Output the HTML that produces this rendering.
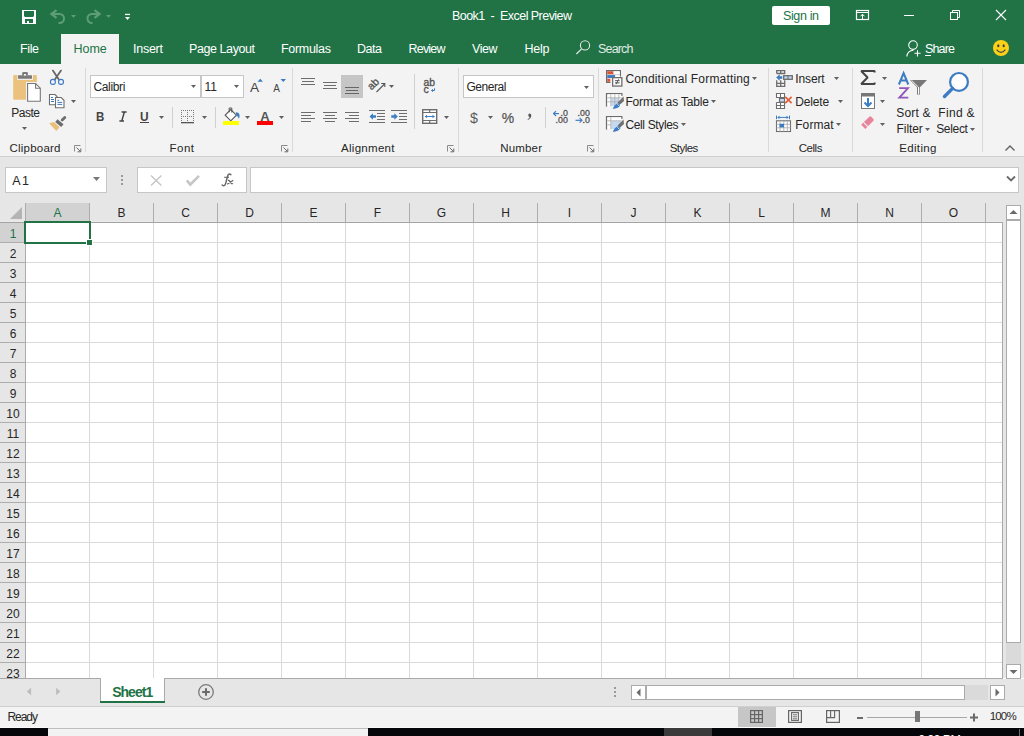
<!DOCTYPE html>
<html><head><meta charset="utf-8"><style>
html,body{margin:0;padding:0;width:1024px;height:736px;overflow:hidden;background:#fff;}
body{position:relative;font-family:"Liberation Sans", sans-serif;}
body>div,body>span,body>svg{position:absolute;}
span{white-space:pre;}
</style></head><body>
<div style="left:0px;top:0px;width:1024px;height:64px;background:#217346;"></div>
<div style="left:61px;top:34px;width:58px;height:30px;background:#f3f3f3;"></div>
<span style="left:452px;top:10.42px;font-size:12.5px;line-height:12.5px;font-weight:400;color:#ffffff;letter-spacing:-0.545px;">Book1  -  Excel Preview</span>
<div style="left:772px;top:6px;width:58px;height:19px;background:#ffffff;border-radius:2px;"></div>
<span style="left:783px;top:10.42px;font-size:12.5px;line-height:12.5px;font-weight:400;color:#217346;letter-spacing:-0.372px;">Sign in</span>
<span style="left:20px;top:43.42px;font-size:12.5px;line-height:12.5px;font-weight:400;color:#ffffff;letter-spacing:-0.385px;">File</span>
<span style="left:73.5px;top:43.42px;font-size:12.5px;line-height:12.5px;font-weight:400;color:#217346;letter-spacing:-0.015px;">Home</span>
<span style="left:133px;top:43.42px;font-size:12.5px;line-height:12.5px;font-weight:400;color:#ffffff;letter-spacing:-0.253px;">Insert</span>
<span style="left:189px;top:43.42px;font-size:12.5px;line-height:12.5px;font-weight:400;color:#ffffff;letter-spacing:-0.420px;">Page Layout</span>
<span style="left:281px;top:43.42px;font-size:12.5px;line-height:12.5px;font-weight:400;color:#ffffff;letter-spacing:-0.299px;">Formulas</span>
<span style="left:357px;top:43.42px;font-size:12.5px;line-height:12.5px;font-weight:400;color:#ffffff;letter-spacing:-0.469px;">Data</span>
<span style="left:408.5px;top:43.42px;font-size:12.5px;line-height:12.5px;font-weight:400;color:#ffffff;letter-spacing:-0.800px;">Review</span>
<span style="left:472px;top:43.42px;font-size:12.5px;line-height:12.5px;font-weight:400;color:#ffffff;letter-spacing:-0.458px;">View</span>
<span style="left:524.5px;top:43.42px;font-size:12.5px;line-height:12.5px;font-weight:400;color:#ffffff;letter-spacing:-0.240px;">Help</span>
<span style="left:598px;top:43.42px;font-size:12.5px;line-height:12.5px;font-weight:400;color:#e0ebe4;letter-spacing:-0.822px;">Search</span>
<span style="left:925px;top:43.42px;font-size:12.5px;line-height:12.5px;font-weight:400;color:#ffffff;letter-spacing:-0.840px;">Share</span>
<div style="left:0px;top:64px;width:1024px;height:92px;background:#f3f3f3;"></div>
<div style="left:0px;top:156px;width:1024px;height:1px;background:#d0d0d0;"></div>
<div style="left:0px;top:157px;width:1024px;height:521px;background:#e6e6e6;"></div>
<div style="left:85px;top:68px;width:1px;height:84px;background:#d9d9d9;"></div>
<div style="left:292px;top:68px;width:1px;height:84px;background:#d9d9d9;"></div>
<div style="left:458px;top:68px;width:1px;height:84px;background:#d9d9d9;"></div>
<div style="left:598px;top:68px;width:1px;height:84px;background:#d9d9d9;"></div>
<div style="left:768px;top:68px;width:1px;height:84px;background:#d9d9d9;"></div>
<div style="left:852px;top:68px;width:1px;height:84px;background:#d9d9d9;"></div>
<div style="left:982px;top:68px;width:1px;height:84px;background:#d9d9d9;"></div>
<span style="left:9.5px;top:142.87px;font-size:11.5px;line-height:11.5px;font-weight:400;color:#262626;letter-spacing:0.221px;">Clipboard</span>
<span style="left:169.5px;top:142.87px;font-size:11.5px;line-height:11.5px;font-weight:400;color:#262626;letter-spacing:0.495px;">Font</span>
<span style="left:341px;top:142.87px;font-size:11.5px;line-height:11.5px;font-weight:400;color:#262626;letter-spacing:0.295px;">Alignment</span>
<span style="left:500.3px;top:142.87px;font-size:11.5px;line-height:11.5px;font-weight:400;color:#262626;letter-spacing:0.159px;">Number</span>
<span style="left:669.7px;top:142.87px;font-size:11.5px;line-height:11.5px;font-weight:400;color:#262626;letter-spacing:-0.546px;">Styles</span>
<span style="left:798.7px;top:142.87px;font-size:11.5px;line-height:11.5px;font-weight:400;color:#262626;letter-spacing:-0.466px;">Cells</span>
<span style="left:899.2px;top:142.87px;font-size:11.5px;line-height:11.5px;font-weight:400;color:#262626;letter-spacing:0.355px;">Editing</span>
<span style="left:11.3px;top:106.64px;font-size:12px;line-height:12px;font-weight:400;color:#262626;letter-spacing:-0.497px;">Paste</span>
<span style="left:625.4px;top:73.04px;font-size:12px;line-height:12px;font-weight:400;color:#262626;letter-spacing:0.175px;">Conditional Formatting</span>
<span style="left:625.4px;top:95.84px;font-size:12px;line-height:12px;font-weight:400;color:#262626;letter-spacing:-0.159px;">Format as Table</span>
<span style="left:625.4px;top:118.84px;font-size:12px;line-height:12px;font-weight:400;color:#262626;letter-spacing:-0.349px;">Cell Styles</span>
<span style="left:795.2px;top:72.64px;font-size:12px;line-height:12px;font-weight:400;color:#262626;letter-spacing:-0.103px;">Insert</span>
<span style="left:795.2px;top:96.34px;font-size:12px;line-height:12px;font-weight:400;color:#262626;letter-spacing:-0.138px;">Delete</span>
<span style="left:795.2px;top:119.44px;font-size:12px;line-height:12px;font-weight:400;color:#262626;letter-spacing:0.097px;">Format</span>
<span style="left:896.3px;top:106.84px;font-size:12px;line-height:12px;font-weight:400;color:#262626;letter-spacing:0.188px;">Sort &</span>
<span style="left:896.6px;top:123.44px;font-size:12px;line-height:12px;font-weight:400;color:#262626;letter-spacing:-0.094px;">Filter</span>
<span style="left:938.3px;top:106.84px;font-size:12px;line-height:12px;font-weight:400;color:#262626;letter-spacing:0.303px;">Find &</span>
<span style="left:936.2px;top:123.44px;font-size:12px;line-height:12px;font-weight:400;color:#262626;letter-spacing:-0.332px;">Select</span>
<div style="left:90px;top:75px;width:109px;height:21px;background:#fff;border:1px solid #c6c6c6;"></div>
<span style="left:93.4px;top:80.74px;font-size:12px;line-height:12px;font-weight:400;color:#262626;letter-spacing:-0.336px;">Calibri</span>
<div style="left:201px;top:75px;width:41px;height:21px;background:#fff;border:1px solid #c6c6c6;"></div>
<span style="left:204.4px;top:80.74px;font-size:12px;line-height:12px;font-weight:400;color:#262626;">11</span>
<div style="left:463px;top:75px;width:129px;height:21px;background:#fff;border:1px solid #c6c6c6;"></div>
<span style="left:466.4px;top:80.74px;font-size:12px;line-height:12px;font-weight:400;color:#262626;letter-spacing:-0.451px;">General</span>
<div style="left:5px;top:167px;width:100px;height:24px;background:#fff;border:1px solid #c6c6c6;"></div>
<span style="left:12.3px;top:174.72px;font-size:12.5px;line-height:12.5px;font-weight:400;color:#262626;letter-spacing:1.403px;">A1</span>
<div style="left:121px;top:175px;width:2px;height:2px;background:#9a9a9a;"></div>
<div style="left:121px;top:179px;width:2px;height:2px;background:#9a9a9a;"></div>
<div style="left:121px;top:183px;width:2px;height:2px;background:#9a9a9a;"></div>
<div style="left:137px;top:167px;width:108px;height:24px;background:#fff;border:1px solid #c6c6c6;"></div>
<div style="left:250px;top:167px;width:767px;height:24px;background:#fff;border:1px solid #c6c6c6;"></div>
<div style="left:25px;top:222px;width:977px;height:456px;background:#ffffff;"></div>
<div style="left:25px;top:242px;width:977px;height:1px;background:#dadada;"></div>
<div style="left:25px;top:262px;width:977px;height:1px;background:#dadada;"></div>
<div style="left:25px;top:282px;width:977px;height:1px;background:#dadada;"></div>
<div style="left:25px;top:302px;width:977px;height:1px;background:#dadada;"></div>
<div style="left:25px;top:322px;width:977px;height:1px;background:#dadada;"></div>
<div style="left:25px;top:342px;width:977px;height:1px;background:#dadada;"></div>
<div style="left:25px;top:362px;width:977px;height:1px;background:#dadada;"></div>
<div style="left:25px;top:382px;width:977px;height:1px;background:#dadada;"></div>
<div style="left:25px;top:402px;width:977px;height:1px;background:#dadada;"></div>
<div style="left:25px;top:422px;width:977px;height:1px;background:#dadada;"></div>
<div style="left:25px;top:442px;width:977px;height:1px;background:#dadada;"></div>
<div style="left:25px;top:462px;width:977px;height:1px;background:#dadada;"></div>
<div style="left:25px;top:482px;width:977px;height:1px;background:#dadada;"></div>
<div style="left:25px;top:502px;width:977px;height:1px;background:#dadada;"></div>
<div style="left:25px;top:522px;width:977px;height:1px;background:#dadada;"></div>
<div style="left:25px;top:542px;width:977px;height:1px;background:#dadada;"></div>
<div style="left:25px;top:562px;width:977px;height:1px;background:#dadada;"></div>
<div style="left:25px;top:582px;width:977px;height:1px;background:#dadada;"></div>
<div style="left:25px;top:602px;width:977px;height:1px;background:#dadada;"></div>
<div style="left:25px;top:622px;width:977px;height:1px;background:#dadada;"></div>
<div style="left:25px;top:642px;width:977px;height:1px;background:#dadada;"></div>
<div style="left:25px;top:662px;width:977px;height:1px;background:#dadada;"></div>
<div style="left:89px;top:222px;width:1px;height:456px;background:#dadada;"></div>
<div style="left:153px;top:222px;width:1px;height:456px;background:#dadada;"></div>
<div style="left:217px;top:222px;width:1px;height:456px;background:#dadada;"></div>
<div style="left:281px;top:222px;width:1px;height:456px;background:#dadada;"></div>
<div style="left:345px;top:222px;width:1px;height:456px;background:#dadada;"></div>
<div style="left:409px;top:222px;width:1px;height:456px;background:#dadada;"></div>
<div style="left:473px;top:222px;width:1px;height:456px;background:#dadada;"></div>
<div style="left:537px;top:222px;width:1px;height:456px;background:#dadada;"></div>
<div style="left:601px;top:222px;width:1px;height:456px;background:#dadada;"></div>
<div style="left:665px;top:222px;width:1px;height:456px;background:#dadada;"></div>
<div style="left:729px;top:222px;width:1px;height:456px;background:#dadada;"></div>
<div style="left:793px;top:222px;width:1px;height:456px;background:#dadada;"></div>
<div style="left:857px;top:222px;width:1px;height:456px;background:#dadada;"></div>
<div style="left:921px;top:222px;width:1px;height:456px;background:#dadada;"></div>
<div style="left:985px;top:222px;width:1px;height:456px;background:#dadada;"></div>
<div style="left:0px;top:221px;width:1002px;height:1px;background:#ebebeb;"></div>
<div style="left:0px;top:222px;width:1003px;height:1px;background:#a3a3a3;"></div>
<div style="left:26px;top:203px;width:63px;height:18px;background:#d2d2d2;"></div>
<div style="left:25px;top:203px;width:1px;height:18px;background:#ababab;"></div>
<div style="left:89px;top:203px;width:1px;height:19px;background:#adadad;"></div>
<div style="left:153px;top:203px;width:1px;height:19px;background:#adadad;"></div>
<div style="left:217px;top:203px;width:1px;height:19px;background:#adadad;"></div>
<div style="left:281px;top:203px;width:1px;height:19px;background:#adadad;"></div>
<div style="left:345px;top:203px;width:1px;height:19px;background:#adadad;"></div>
<div style="left:409px;top:203px;width:1px;height:19px;background:#adadad;"></div>
<div style="left:473px;top:203px;width:1px;height:19px;background:#adadad;"></div>
<div style="left:537px;top:203px;width:1px;height:19px;background:#adadad;"></div>
<div style="left:601px;top:203px;width:1px;height:19px;background:#adadad;"></div>
<div style="left:665px;top:203px;width:1px;height:19px;background:#adadad;"></div>
<div style="left:729px;top:203px;width:1px;height:19px;background:#adadad;"></div>
<div style="left:793px;top:203px;width:1px;height:19px;background:#adadad;"></div>
<div style="left:857px;top:203px;width:1px;height:19px;background:#adadad;"></div>
<div style="left:921px;top:203px;width:1px;height:19px;background:#adadad;"></div>
<div style="left:985px;top:203px;width:1px;height:19px;background:#adadad;"></div>
<span style="left:57.5px;top:207.14px;font-size:12px;line-height:12px;font-weight:400;color:#217346;transform:translateX(-50%);">A</span>
<span style="left:121.5px;top:207.14px;font-size:12px;line-height:12px;font-weight:400;color:#262626;transform:translateX(-50%);">B</span>
<span style="left:185.5px;top:207.14px;font-size:12px;line-height:12px;font-weight:400;color:#262626;transform:translateX(-50%);">C</span>
<span style="left:249.5px;top:207.14px;font-size:12px;line-height:12px;font-weight:400;color:#262626;transform:translateX(-50%);">D</span>
<span style="left:313.5px;top:207.14px;font-size:12px;line-height:12px;font-weight:400;color:#262626;transform:translateX(-50%);">E</span>
<span style="left:377.5px;top:207.14px;font-size:12px;line-height:12px;font-weight:400;color:#262626;transform:translateX(-50%);">F</span>
<span style="left:441.5px;top:207.14px;font-size:12px;line-height:12px;font-weight:400;color:#262626;transform:translateX(-50%);">G</span>
<span style="left:505.5px;top:207.14px;font-size:12px;line-height:12px;font-weight:400;color:#262626;transform:translateX(-50%);">H</span>
<span style="left:569.5px;top:207.14px;font-size:12px;line-height:12px;font-weight:400;color:#262626;transform:translateX(-50%);">I</span>
<span style="left:633.5px;top:207.14px;font-size:12px;line-height:12px;font-weight:400;color:#262626;transform:translateX(-50%);">J</span>
<span style="left:697.5px;top:207.14px;font-size:12px;line-height:12px;font-weight:400;color:#262626;transform:translateX(-50%);">K</span>
<span style="left:761.5px;top:207.14px;font-size:12px;line-height:12px;font-weight:400;color:#262626;transform:translateX(-50%);">L</span>
<span style="left:825.5px;top:207.14px;font-size:12px;line-height:12px;font-weight:400;color:#262626;transform:translateX(-50%);">M</span>
<span style="left:889.5px;top:207.14px;font-size:12px;line-height:12px;font-weight:400;color:#262626;transform:translateX(-50%);">N</span>
<span style="left:953.5px;top:207.14px;font-size:12px;line-height:12px;font-weight:400;color:#262626;transform:translateX(-50%);">O</span>
<div style="left:25px;top:222px;width:1px;height:456px;background:#ababab;"></div>
<div style="left:0px;top:223px;width:25px;height:19px;background:#d2d2d2;"></div>
<div style="left:0px;top:242px;width:25px;height:1px;background:#adadad;"></div>
<div style="left:0px;top:262px;width:25px;height:1px;background:#adadad;"></div>
<div style="left:0px;top:282px;width:25px;height:1px;background:#adadad;"></div>
<div style="left:0px;top:302px;width:25px;height:1px;background:#adadad;"></div>
<div style="left:0px;top:322px;width:25px;height:1px;background:#adadad;"></div>
<div style="left:0px;top:342px;width:25px;height:1px;background:#adadad;"></div>
<div style="left:0px;top:362px;width:25px;height:1px;background:#adadad;"></div>
<div style="left:0px;top:382px;width:25px;height:1px;background:#adadad;"></div>
<div style="left:0px;top:402px;width:25px;height:1px;background:#adadad;"></div>
<div style="left:0px;top:422px;width:25px;height:1px;background:#adadad;"></div>
<div style="left:0px;top:442px;width:25px;height:1px;background:#adadad;"></div>
<div style="left:0px;top:462px;width:25px;height:1px;background:#adadad;"></div>
<div style="left:0px;top:482px;width:25px;height:1px;background:#adadad;"></div>
<div style="left:0px;top:502px;width:25px;height:1px;background:#adadad;"></div>
<div style="left:0px;top:522px;width:25px;height:1px;background:#adadad;"></div>
<div style="left:0px;top:542px;width:25px;height:1px;background:#adadad;"></div>
<div style="left:0px;top:562px;width:25px;height:1px;background:#adadad;"></div>
<div style="left:0px;top:582px;width:25px;height:1px;background:#adadad;"></div>
<div style="left:0px;top:602px;width:25px;height:1px;background:#adadad;"></div>
<div style="left:0px;top:622px;width:25px;height:1px;background:#adadad;"></div>
<div style="left:0px;top:642px;width:25px;height:1px;background:#adadad;"></div>
<div style="left:0px;top:662px;width:25px;height:1px;background:#adadad;"></div>
<span style="left:13px;top:228.14px;font-size:12px;line-height:12px;font-weight:400;color:#217346;transform:translateX(-50%);">1</span>
<span style="left:13px;top:248.14px;font-size:12px;line-height:12px;font-weight:400;color:#262626;transform:translateX(-50%);">2</span>
<span style="left:13px;top:268.14px;font-size:12px;line-height:12px;font-weight:400;color:#262626;transform:translateX(-50%);">3</span>
<span style="left:13px;top:288.14px;font-size:12px;line-height:12px;font-weight:400;color:#262626;transform:translateX(-50%);">4</span>
<span style="left:13px;top:308.14px;font-size:12px;line-height:12px;font-weight:400;color:#262626;transform:translateX(-50%);">5</span>
<span style="left:13px;top:328.14px;font-size:12px;line-height:12px;font-weight:400;color:#262626;transform:translateX(-50%);">6</span>
<span style="left:13px;top:348.14px;font-size:12px;line-height:12px;font-weight:400;color:#262626;transform:translateX(-50%);">7</span>
<span style="left:13px;top:368.14px;font-size:12px;line-height:12px;font-weight:400;color:#262626;transform:translateX(-50%);">8</span>
<span style="left:13px;top:388.14px;font-size:12px;line-height:12px;font-weight:400;color:#262626;transform:translateX(-50%);">9</span>
<span style="left:13px;top:408.14px;font-size:12px;line-height:12px;font-weight:400;color:#262626;transform:translateX(-50%);">10</span>
<span style="left:13px;top:428.14px;font-size:12px;line-height:12px;font-weight:400;color:#262626;transform:translateX(-50%);">11</span>
<span style="left:13px;top:448.14px;font-size:12px;line-height:12px;font-weight:400;color:#262626;transform:translateX(-50%);">12</span>
<span style="left:13px;top:468.14px;font-size:12px;line-height:12px;font-weight:400;color:#262626;transform:translateX(-50%);">13</span>
<span style="left:13px;top:488.14px;font-size:12px;line-height:12px;font-weight:400;color:#262626;transform:translateX(-50%);">14</span>
<span style="left:13px;top:508.14px;font-size:12px;line-height:12px;font-weight:400;color:#262626;transform:translateX(-50%);">15</span>
<span style="left:13px;top:528.14px;font-size:12px;line-height:12px;font-weight:400;color:#262626;transform:translateX(-50%);">16</span>
<span style="left:13px;top:548.14px;font-size:12px;line-height:12px;font-weight:400;color:#262626;transform:translateX(-50%);">17</span>
<span style="left:13px;top:568.14px;font-size:12px;line-height:12px;font-weight:400;color:#262626;transform:translateX(-50%);">18</span>
<span style="left:13px;top:588.14px;font-size:12px;line-height:12px;font-weight:400;color:#262626;transform:translateX(-50%);">19</span>
<span style="left:13px;top:608.14px;font-size:12px;line-height:12px;font-weight:400;color:#262626;transform:translateX(-50%);">20</span>
<span style="left:13px;top:628.14px;font-size:12px;line-height:12px;font-weight:400;color:#262626;transform:translateX(-50%);">21</span>
<span style="left:13px;top:648.14px;font-size:12px;line-height:12px;font-weight:400;color:#262626;transform:translateX(-50%);">22</span>
<span style="left:13px;top:668.14px;font-size:12px;line-height:12px;font-weight:400;color:#262626;transform:translateX(-50%);">23</span>
<svg style="left:0px;top:203px;" width="25" height="19" viewBox="0 0 25 19"><polygon points="22,4 22,16 10,16" fill="#b4b4b4"/></svg>
<div style="left:1002px;top:222px;width:1px;height:456px;background:#a9a9a9;"></div>
<div style="left:0px;top:678px;width:1003px;height:1px;background:#a9a9a9;"></div>
<div style="left:24px;top:221px;width:63px;height:19px;border:2px solid #217346;"></div>
<div style="left:86px;top:239px;width:7px;height:7px;background:#ffffff;"></div>
<div style="left:87px;top:240px;width:5px;height:5px;background:#217346;"></div>
<div style="left:1006px;top:205px;width:13px;height:13px;background:#fff;border:1px solid #ababab;"></div>
<div style="left:1006px;top:220px;width:13px;height:421px;background:#fff;border:1px solid #ababab;"></div>
<div style="left:1006px;top:643px;width:15px;height:21px;background:#dadada;"></div>
<div style="left:1006px;top:664px;width:13px;height:13px;background:#fff;border:1px solid #ababab;"></div>
<svg style="left:1006px;top:205px;" width="15" height="15" viewBox="0 0 15 15"><polygon points="3.5,9 11.5,9 7.5,5" fill="#6a6a6a"/></svg>
<svg style="left:1006px;top:664px;" width="15" height="15" viewBox="0 0 15 15"><polygon points="3.5,6 11.5,6 7.5,10" fill="#6a6a6a"/></svg>
<div style="left:0px;top:679px;width:1024px;height:27px;background:#e6e6e6;"></div>
<div style="left:0px;top:706px;width:1024px;height:1px;background:#cfcfcf;"></div>
<div style="left:100px;top:678px;width:63px;height:23px;background:#fff;border-left:1px solid #a9a9a9;border-right:1px solid #a9a9a9;"></div>
<div style="left:100px;top:701px;width:65px;height:2px;background:#217346;"></div>
<span style="left:112.2px;top:684.65px;font-size:14px;line-height:14px;font-weight:700;color:#217346;letter-spacing:-0.984px;">Sheet1</span>
<svg style="left:197px;top:683px;" width="18" height="18" viewBox="0 0 18 18"><circle cx="9" cy="9" r="7.3" fill="none" stroke="#7a7a7a" stroke-width="1.3"/><path d="M9 5.2V12.8M5.2 9H12.8" stroke="#6a6a6a" stroke-width="2"/></svg>
<svg style="left:22px;top:684px;" width="44" height="16" viewBox="0 0 44 16"><polygon points="9.1,3.8 9.1,11.2 4.8,7.5" fill="#bdbdbd"/><polygon points="34.1,3.8 34.1,11.2 38.3,7.5" fill="#bdbdbd"/></svg>
<div style="left:614px;top:687px;width:2px;height:2px;background:#9a9a9a;"></div>
<div style="left:614px;top:691px;width:2px;height:2px;background:#9a9a9a;"></div>
<div style="left:614px;top:695px;width:2px;height:2px;background:#9a9a9a;"></div>
<div style="left:631px;top:685px;width:13px;height:13px;background:#fff;border:1px solid #ababab;"></div>
<div style="left:646px;top:685px;width:317px;height:13px;background:#fff;border:1px solid #ababab;"></div>
<div style="left:965px;top:685px;width:23px;height:15px;background:#dadada;"></div>
<div style="left:990px;top:685px;width:13px;height:13px;background:#fff;border:1px solid #ababab;"></div>
<svg style="left:631px;top:685px;" width="15" height="15" viewBox="0 0 15 15"><polygon points="9.5,3.5 9.5,11.5 5.5,7.5" fill="#6a6a6a"/></svg>
<svg style="left:990px;top:685px;" width="15" height="15" viewBox="0 0 15 15"><polygon points="5.5,3.5 5.5,11.5 9.5,7.5" fill="#6a6a6a"/></svg>
<div style="left:0px;top:707px;width:1024px;height:21px;background:#f3f3f3;"></div>
<span style="left:7.5px;top:711.34px;font-size:12px;line-height:12px;font-weight:400;color:#262626;letter-spacing:-1.047px;">Ready</span>
<div style="left:738px;top:707px;width:38px;height:21px;background:#c6c6c6;"></div>
<span style="left:989.7px;top:711.27px;font-size:11.5px;line-height:11.5px;font-weight:400;color:#262626;letter-spacing:-0.807px;">100%</span>
<div style="left:857px;top:716.5px;width:6px;height:2px;background:#6a6a6a;"></div>
<div style="left:867px;top:717px;width:100px;height:1px;background:#a6a6a6;"></div>
<div style="left:915px;top:711px;width:5px;height:11px;background:#777777;"></div>
<svg style="left:969px;top:712px;" width="10" height="10" viewBox="0 0 10 10"><path d="M1 5.5H9M5 1.5V9.5" stroke="#6a6a6a" stroke-width="2"/></svg>
<div style="left:0px;top:728px;width:1024px;height:8px;background:#05060a;"></div>
<div style="left:48px;top:728px;width:320px;height:8px;background:#f2f2f2;"></div>
<div style="left:48px;top:728px;width:320px;height:1px;background:#bdbdbd;"></div>
<div style="left:0px;top:727px;width:48px;height:1px;background:#fafafa;"></div>
<div style="left:368px;top:727px;width:656px;height:1px;background:#fafafa;"></div>
<div style="left:664px;top:728px;width:48px;height:8px;background:#3a3a3a;"></div>
<span style="left:918px;top:733.92px;font-size:12.5px;line-height:12.5px;font-weight:400;color:#ffffff;letter-spacing:-0.594px;">6:00 PM</span>
<div style="left:1019px;top:729px;width:1px;height:7px;background:#6a6a6a;"></div>
<svg style="left:22px;top:10px;" width="14" height="14" viewBox="0 0 14 14"><rect x="0" y="0" width="14" height="14" fill="#fff"/><path d="M2 1H12V6L11 7H3L2 6Z" fill="#217346"/><rect x="3" y="9" width="8" height="4" fill="#217346"/><rect x="5" y="11" width="2" height="2" fill="#fff"/></svg>
<svg style="left:48px;top:8px;" width="30" height="18" viewBox="0 0 30 18"><path d="M4 6H11.5A4.5 4.5 0 0 1 11.5 15H10.5" fill="none" stroke="#5f9d79" stroke-width="2"/><path d="M8.5 2.2L3.4 6L8.5 9.8" fill="none" stroke="#5f9d79" stroke-width="2.2"/><polygon points="23,7 28,7 25.5,9.8" fill="#5f9d79"/></svg>
<svg style="left:84px;top:8px;" width="30" height="18" viewBox="0 0 30 18"><path d="M15 6H8A4.5 4.5 0 0 0 8 15H8.5" fill="none" stroke="#5f9d79" stroke-width="2"/><path d="M10.5 2.2L15.6 6L10.5 9.8" fill="none" stroke="#5f9d79" stroke-width="2.2"/><polygon points="22,7 27,7 24.5,9.8" fill="#5f9d79"/></svg>
<svg style="left:124px;top:12px;" width="8" height="10" viewBox="0 0 8 10"><rect x="1" y="1.8" width="5" height="1.3" fill="#fff"/><polygon points="1,5 6,5 3.5,8" fill="#fff"/></svg>
<svg style="left:855px;top:9px;" width="16" height="12" viewBox="0 0 16 12"><rect x="1.5" y="1.5" width="12" height="9" fill="none" stroke="#fff" stroke-width="1.2"/><path d="M2 3.5H13" stroke="#fff" stroke-width="1"/><path d="M7.5 10.5V5M5.5 7.3L7.5 5.2L9.5 7.3" fill="none" stroke="#fff" stroke-width="1"/></svg>
<div style="left:904px;top:15px;width:10px;height:1px;background:#ffffff;"></div>
<svg style="left:948px;top:8px;" width="14" height="14" viewBox="0 0 14 14"><path d="M4.5 4V2.5H11.5V9.5H10" fill="none" stroke="#fff" stroke-width="1"/><rect x="2.5" y="4.5" width="7" height="7" fill="none" stroke="#fff" stroke-width="1"/></svg>
<svg style="left:994px;top:8px;" width="14" height="14" viewBox="0 0 14 14"><path d="M2 2L12 12M12 2L2 12" stroke="#fff" stroke-width="1.1"/></svg>
<svg style="left:574px;top:38px;" width="18" height="18" viewBox="0 0 18 18"><circle cx="11" cy="7.4" r="4.6" fill="none" stroke="#dfe9e2" stroke-width="1.1"/><path d="M7.6 10.8L2.4 16" stroke="#dfe9e2" stroke-width="1.2"/></svg>
<svg style="left:904px;top:38px;" width="20" height="22" viewBox="0 0 20 22"><circle cx="9" cy="7.1" r="4.3" fill="none" stroke="#fff" stroke-width="1.1"/><path d="M2.8 18.5C3.3 14.5 6 12.3 9.5 12.2" fill="none" stroke="#fff" stroke-width="1.1"/><path d="M10.5 15.3H16.6M13.5 12.3V18.6" stroke="#fff" stroke-width="1.1"/></svg>
<div style="left:925px;top:54.7px;width:6px;height:1.1px;background:#ffffff;"></div>
<svg style="left:990px;top:38px;" width="22" height="20" viewBox="0 0 22 20"><circle cx="11" cy="10" r="8" fill="#fdd117"/><ellipse cx="8.3" cy="7.8" rx="1.1" ry="1.5" fill="#3d3d55"/><ellipse cx="13.7" cy="7.8" rx="1.1" ry="1.5" fill="#3d3d55"/><path d="M6.6 11.6Q11 17.2 15.4 11.6" fill="none" stroke="#3d3d55" stroke-width="1.1"/></svg>
<svg style="left:8px;top:68px;" width="38" height="38" viewBox="0 0 38 38"><path d="M5.2 8.2Q5.2 7 6.4 7H27.8Q28.9 7 28.9 8.2V14H19V31.7H6.4Q5.2 31.7 5.2 30.5Z" fill="#eac27e"/><path d="M9.3 7V11.9H25V7Z" fill="#f3f3f3"/><rect x="10" y="7.2" width="14" height="3.6" fill="#7a7a7a" rx="0.5"/><rect x="14.2" y="4.1" width="5.7" height="3.4" fill="#7a7a7a" rx="1.2"/><rect x="16" y="6" width="2" height="1.6" fill="#f3f3f3"/><path d="M18 14H28L33.7 19.6V34.8H18Z" fill="#f3f3f3"/><path d="M19.6 15.5H27.6L32.3 20.2V33.3H19.6Z" fill="#fff" stroke="#777" stroke-width="1.1"/><path d="M27.6 15.5V20.2H32.3" fill="none" stroke="#777" stroke-width="1.1"/></svg>
<svg style="left:22px;top:127px;" width="5" height="3" viewBox="0 0 5 3"><polygon points="0,0 5,0 2.5,3" fill="#606060"/></svg>
<svg style="left:46px;top:66px;" width="22" height="22" viewBox="0 0 22 22"><path d="M6.9 4.6L12.7 13.2M15 4.6L9 13.2" stroke="#666" stroke-width="1.8" stroke-linecap="round"/><circle cx="6.9" cy="15.9" r="2.5" fill="none" stroke="#3b78c2" stroke-width="1.1"/><circle cx="15" cy="15.9" r="2.5" fill="none" stroke="#3b78c2" stroke-width="1.1"/></svg>
<svg style="left:46px;top:92px;" width="22" height="18" viewBox="0 0 22 18"><path d="M3.5 2.5H9L11 4.5V12.7H3.5Z" fill="#fff" stroke="#6d6d6d" stroke-width="1.1"/><path d="M5 5.5H7M5 7.5H8M5 9.5H8" stroke="#3b78c2" stroke-width="1"/><path d="M9.5 5.5H15.2L18 8.3V15.8H9.5Z" fill="#fff" stroke="#6d6d6d" stroke-width="1.1"/><path d="M11.4 8.3H13.2M11.4 10.4H16.2M11.4 12.4H16.2" stroke="#3b78c2" stroke-width="1"/></svg>
<svg style="left:71px;top:100px;" width="5" height="3" viewBox="0 0 5 3"><polygon points="0,0 5,0 2.5,3" fill="#606060"/></svg>
<svg style="left:46px;top:114px;" width="22" height="20" viewBox="0 0 22 20"><path d="M16.2 6L18.8 3.4" stroke="#6d6d6d" stroke-width="2.8" stroke-linecap="round"/><path d="M10.3 6.6L16.4 11.6" stroke="#6d6d6d" stroke-width="3.6"/><path d="M3.1 9.2L7.8 7.9L13.6 13.3L10.3 17Z" fill="#e9bf77"/></svg>
<svg style="left:191px;top:84.5px;" width="5" height="3" viewBox="0 0 5 3"><polygon points="0,0 5,0 2.5,3" fill="#606060"/></svg>
<svg style="left:234px;top:84.5px;" width="5" height="3" viewBox="0 0 5 3"><polygon points="0,0 5,0 2.5,3" fill="#606060"/></svg>
<span style="left:250.3px;top:81.00px;font-size:13px;line-height:13px;font-weight:400;color:#444444;transform:scaleX(1.05);transform-origin:0 0;">A</span>
<svg style="left:257px;top:78px;" width="7" height="4" viewBox="0 0 7 4"><polygon points="0.5,3.8 6,3.8 3.25,0.8" fill="#3d7cc2"/></svg>
<span style="left:273.3px;top:83.53px;font-size:10px;line-height:10px;font-weight:400;color:#444444;">A</span>
<svg style="left:279.5px;top:78px;" width="7" height="5" viewBox="0 0 7 5"><polygon points="0.5,1 6,1 3.25,4" fill="#3d7cc2"/></svg>
<span style="left:96.3px;top:111.22px;font-size:12.5px;line-height:12.5px;font-weight:700;color:#444444;transform:scaleX(0.92);transform-origin:0 0;">B</span>
<svg style="left:117px;top:110px;" width="12" height="13" viewBox="0 0 12 13"><path d="M4.6 1.9H9.6M7.4 1.9L4.8 10.9M2.4 10.9H7" fill="none" stroke="#444" stroke-width="1.5"/></svg>
<span style="left:140.1px;top:111.02px;font-size:12.5px;line-height:12.5px;font-weight:700;color:#444444;transform:scaleX(0.95);transform-origin:0 0;">U</span>
<div style="left:140px;top:122px;width:9px;height:1.3px;background:#444444;"></div>
<svg style="left:159px;top:116px;" width="5" height="3" viewBox="0 0 5 3"><polygon points="0,0 5,0 2.5,3" fill="#606060"/></svg>
<div style="left:172px;top:107px;width:1px;height:21px;background:#d0d0d0;"></div>
<svg style="left:181px;top:110px;" width="14" height="14" viewBox="0 0 14 14"><g fill="#7a7a7a"><rect x="0" y="0" width="1" height="1"/><rect x="2" y="0" width="1" height="1"/><rect x="4" y="0" width="1" height="1"/><rect x="6" y="0" width="1" height="1"/><rect x="8" y="0" width="1" height="1"/><rect x="10" y="0" width="1" height="1"/><rect x="12" y="0" width="1" height="1"/><rect x="0" y="6" width="1" height="1"/><rect x="2" y="6" width="1" height="1"/><rect x="4" y="6" width="1" height="1"/><rect x="6" y="6" width="1" height="1"/><rect x="8" y="6" width="1" height="1"/><rect x="10" y="6" width="1" height="1"/><rect x="12" y="6" width="1" height="1"/><rect x="0" y="12" width="1" height="1"/><rect x="2" y="12" width="1" height="1"/><rect x="4" y="12" width="1" height="1"/><rect x="6" y="12" width="1" height="1"/><rect x="8" y="12" width="1" height="1"/><rect x="10" y="12" width="1" height="1"/><rect x="12" y="12" width="1" height="1"/><rect x="0" y="0" width="1" height="1"/><rect x="0" y="2" width="1" height="1"/><rect x="0" y="4" width="1" height="1"/><rect x="0" y="6" width="1" height="1"/><rect x="0" y="8" width="1" height="1"/><rect x="0" y="10" width="1" height="1"/><rect x="0" y="12" width="1" height="1"/><rect x="6" y="0" width="1" height="1"/><rect x="6" y="2" width="1" height="1"/><rect x="6" y="4" width="1" height="1"/><rect x="6" y="6" width="1" height="1"/><rect x="6" y="8" width="1" height="1"/><rect x="6" y="10" width="1" height="1"/><rect x="6" y="12" width="1" height="1"/><rect x="12" y="0" width="1" height="1"/><rect x="12" y="2" width="1" height="1"/><rect x="12" y="4" width="1" height="1"/><rect x="12" y="6" width="1" height="1"/><rect x="12" y="8" width="1" height="1"/><rect x="12" y="10" width="1" height="1"/><rect x="12" y="12" width="1" height="1"/></g><rect x="0" y="12" width="13" height="1.3" fill="#555"/></svg>
<svg style="left:202px;top:116px;" width="5" height="3" viewBox="0 0 5 3"><polygon points="0,0 5,0 2.5,3" fill="#606060"/></svg>
<div style="left:215px;top:107px;width:1px;height:21px;background:#d0d0d0;"></div>
<svg style="left:222px;top:106px;" width="20" height="16" viewBox="0 0 20 16"><path d="M3.2 9.2L8.8 3.6L14.4 9.2L8.8 14.8Z" fill="#fff" stroke="#555" stroke-width="1.1"/><path d="M7.2 6.2V2H9.8V6.6" fill="none" stroke="#555" stroke-width="1"/><path d="M13.8 6.2C17.2 6 18.4 8.8 17 12.8C16.2 11.4 15.4 10.1 14.4 9.2Z" fill="#3d7cc2"/></svg>
<div style="left:223px;top:121px;width:16px;height:3.5px;background:#ffff00;"></div>
<svg style="left:245px;top:116px;" width="5" height="3" viewBox="0 0 5 3"><polygon points="0,0 5,0 2.5,3" fill="#606060"/></svg>
<span style="left:260.3px;top:110.30px;font-size:13px;line-height:13px;font-weight:700;color:#555;transform:scaleX(1.0);transform-origin:0 0;">A</span>
<div style="left:257px;top:121px;width:16px;height:3.5px;background:#ff0000;"></div>
<svg style="left:279px;top:116px;" width="5" height="3" viewBox="0 0 5 3"><polygon points="0,0 5,0 2.5,3" fill="#606060"/></svg>
<svg style="left:74px;top:145px;" width="8" height="8" viewBox="0 0 8 8"><path d="M0.5 6.5V0.5H6.5" fill="none" stroke="#8a8a8a" stroke-width="1"/><path d="M2.5 2.5L6.5 6.5M6.8 3.5V6.8H3.5" fill="none" stroke="#6a6a6a" stroke-width="1"/></svg>
<svg style="left:281px;top:145px;" width="8" height="8" viewBox="0 0 8 8"><path d="M0.5 6.5V0.5H6.5" fill="none" stroke="#8a8a8a" stroke-width="1"/><path d="M2.5 2.5L6.5 6.5M6.8 3.5V6.8H3.5" fill="none" stroke="#6a6a6a" stroke-width="1"/></svg>
<svg style="left:447px;top:145px;" width="8" height="8" viewBox="0 0 8 8"><path d="M0.5 6.5V0.5H6.5" fill="none" stroke="#8a8a8a" stroke-width="1"/><path d="M2.5 2.5L6.5 6.5M6.8 3.5V6.8H3.5" fill="none" stroke="#6a6a6a" stroke-width="1"/></svg>
<svg style="left:587px;top:145px;" width="8" height="8" viewBox="0 0 8 8"><path d="M0.5 6.5V0.5H6.5" fill="none" stroke="#8a8a8a" stroke-width="1"/><path d="M2.5 2.5L6.5 6.5M6.8 3.5V6.8H3.5" fill="none" stroke="#6a6a6a" stroke-width="1"/></svg>
<svg style="left:300px;top:76px;" width="16" height="10" viewBox="0 0 16 10"><path d="M1 2.5H15M2 5.5H14M1 8.5H15" stroke="#6d6d6d" stroke-width="1.1"/></svg>
<svg style="left:322px;top:80px;" width="16" height="10" viewBox="0 0 16 10"><path d="M1 2.5H15M2 5.5H14M1 8.5H15" stroke="#6d6d6d" stroke-width="1.1"/></svg>
<div style="left:341px;top:75px;width:22px;height:23px;background:#c6c6c6;"></div>
<svg style="left:344px;top:85px;" width="16" height="10" viewBox="0 0 16 10"><path d="M1 2.5H15M2 5.5H14M1 8.5H15" stroke="#666" stroke-width="1.1"/></svg>
<svg style="left:366px;top:76px;" width="20" height="20" viewBox="0 0 20 20"><text x="0" y="0" font-family="Liberation Sans" font-size="10.5" fill="#555" stroke="#555" stroke-width="0.35" transform="translate(5.6,14.6) rotate(-45)">ab</text><path d="M10.5 16L18.5 8" stroke="#555" stroke-width="1.1"/><path d="M15.2 7.5H18.8V11.1" fill="none" stroke="#555" stroke-width="1.1"/></svg>
<svg style="left:389px;top:85px;" width="5" height="3" viewBox="0 0 5 3"><polygon points="0,0 5,0 2.5,3" fill="#606060"/></svg>
<div style="left:414px;top:74px;width:1px;height:55px;background:#d0d0d0;"></div>
<svg style="left:422px;top:76px;" width="18" height="18" viewBox="0 0 18 18"><text x="1.6" y="9.7" font-family="Liberation Sans" font-size="10.3" fill="#555" stroke="#555" stroke-width="0.35">ab</text><text x="1.6" y="16.6" font-family="Liberation Sans" font-size="10.5" fill="#555" stroke="#555" stroke-width="0.35">c</text><path d="M12.5 12.3V14.5H9.6M11 13.3L9.5 14.5L11 15.7" fill="none" stroke="#3d7cc2" stroke-width="1"/></svg>
<svg style="left:300px;top:111px;" width="16" height="13" viewBox="0 0 16 13"><path d="M1 1.5H15M1 4.5H11M1 7.5H15M1 10.5H11" stroke="#6d6d6d" stroke-width="1"/></svg>
<svg style="left:322px;top:111px;" width="16" height="13" viewBox="0 0 16 13"><path d="M1 1.5H15M3 4.5H13M1 7.5H15M3 10.5H13" stroke="#6d6d6d" stroke-width="1"/></svg>
<svg style="left:344px;top:111px;" width="16" height="13" viewBox="0 0 16 13"><path d="M1 1.5H15M5 4.5H15M1 7.5H15M5 10.5H15" stroke="#6d6d6d" stroke-width="1"/></svg>
<svg style="left:368px;top:109px;" width="18" height="15" viewBox="0 0 18 15"><path d="M1 1.5H17M9 4.5H17M9 7.5H17M9 10.5H17M1 13.5H17" stroke="#6d6d6d" stroke-width="1"/><path d="M1.5 7.5L5 4.2V6.3H8V8.7H5V10.8Z" fill="#3d7cc2"/></svg>
<svg style="left:390px;top:109px;" width="18" height="15" viewBox="0 0 18 15"><path d="M1 1.5H17M9 4.5H17M9 7.5H17M9 10.5H17M1 13.5H17" stroke="#6d6d6d" stroke-width="1"/><path d="M7.8 7.5L4.3 4.2V6.3H1.3V8.7H4.3V10.8Z" fill="#3d7cc2"/></svg>
<svg style="left:421px;top:108px;" width="18" height="17" viewBox="0 0 18 17"><rect x="1.7" y="1.7" width="14" height="13.6" fill="#fff" stroke="#6d6d6d" stroke-width="1.4"/><path d="M1.7 4.5H15.7M1.7 12.5H15.7M8.7 1.7V4.5M8.7 12.5V15.3" stroke="#6d6d6d" stroke-width="1.2"/><path d="M4 8.5H13.5" stroke="#3d7cc2" stroke-width="1"/><path d="M6 6.7L3.8 8.5L6 10.3ZM11.5 6.7L13.7 8.5L11.5 10.3Z" fill="#3d7cc2"/></svg>
<svg style="left:444px;top:116px;" width="5" height="3" viewBox="0 0 5 3"><polygon points="0,0 5,0 2.5,3" fill="#606060"/></svg>
<svg style="left:584px;top:85.5px;" width="5" height="3" viewBox="0 0 5 3"><polygon points="0,0 5,0 2.5,3" fill="#606060"/></svg>
<span style="left:469.8px;top:109.90px;font-size:15px;line-height:15px;font-weight:400;color:#5a5a5a;transform:scaleX(0.95);transform-origin:0 0;">$</span>
<svg style="left:488px;top:115.5px;" width="5" height="3" viewBox="0 0 5 3"><polygon points="0,0 5,0 2.5,3" fill="#606060"/></svg>
<svg style="left:501px;top:110px;" width="16" height="14" viewBox="0 0 16 14"><text x="0.8" y="12.6" font-family="Liberation Sans" font-size="15.5" fill="#555" stroke="#555" stroke-width="0.25" transform="scale(0.9,1)">%</text></svg>
<svg style="left:525px;top:111px;" width="9" height="11" viewBox="0 0 9 11"><path d="M4.4 2.6Q6.3 2.6 6.3 4.6Q6.3 7.3 2.9 8.9L2.6 8.2Q4.5 7.1 4.6 5.9Q3.3 5.8 3.3 4.3Q3.3 2.6 4.4 2.6Z" fill="#555"/></svg>
<div style="left:545px;top:107px;width:1px;height:21px;background:#d0d0d0;"></div>
<svg style="left:551px;top:108px;" width="18" height="17" viewBox="0 0 18 17"><g font-family="Liberation Sans" font-size="8.8" fill="#555" stroke="#555" stroke-width="0.3" text-anchor="end"><text x="16.8" y="8.4">.0</text><text x="16.8" y="15.3">.00</text></g><path d="M2.6 5.6H8" stroke="#3d7cc2" stroke-width="1.2"/><path d="M5 3.2L2.6 5.6L5 8" fill="none" stroke="#3d7cc2" stroke-width="1.2"/></svg>
<svg style="left:573px;top:108px;" width="18" height="17" viewBox="0 0 18 17"><g font-family="Liberation Sans" font-size="8.8" fill="#555" stroke="#555" stroke-width="0.3" text-anchor="end"><text x="16.8" y="8.4">.00</text><text x="16.8" y="15.3">.0</text></g><path d="M2.5 12.3H9" stroke="#3d7cc2" stroke-width="1.2"/><path d="M6.6 9.9L9 12.3L6.6 14.7" fill="none" stroke="#3d7cc2" stroke-width="1.2"/></svg>
<svg style="left:604px;top:68px;" width="22" height="20" viewBox="0 0 22 20"><path d="M2 2H17V8.5H15.7V3.3H3.3V13.7H6.5V15H2Z" fill="#6d6d6d"/><rect x="3.3" y="3.3" width="6" height="3" fill="#e0522f"/><rect x="9.8" y="3.3" width="5.9" height="3" fill="#fff"/><rect x="3.3" y="7" width="8" height="3" fill="#3d7cc2"/><rect x="11.3" y="7" width="4.4" height="2" fill="#fff"/><rect x="3.3" y="10.7" width="3" height="3" fill="#e0522f"/><path d="M9.5 3.3V6.5M3.3 6.6H15.7" stroke="#c0c0c0" stroke-width="0.7"/><rect x="8.65" y="9.65" width="9.2" height="8.4" fill="#fff" stroke="#6d6d6d" stroke-width="1.3"/><path d="M11 12.7H15.6M11 14.9H15.6M14.6 11.3L12 16.3" stroke="#555" stroke-width="1"/></svg>
<svg style="left:604px;top:91px;" width="22" height="20" viewBox="0 0 22 20"><path d="M2.6 15.6V2.6H17.8V5" fill="none" stroke="#6d6d6d" stroke-width="1.4"/><rect x="3.3" y="3.3" width="14" height="12" fill="#fff"/><rect x="7" y="7" width="8" height="8" fill="#c5daf0"/><path d="M6.8 3.3V15.3M10.8 3.3V15.3M14.8 3.3V11M3.3 6.8H17.5M3.3 10.8H15" stroke="#b0b0b0" stroke-width="0.9"/><path d="M19.5 5.5L13.6 11.6L15.8 13.7L20 10Z" fill="#707070"/><path d="M8.7 17.8C10 14.7 11.8 12.6 14.8 12.2C16.2 13 16.2 14.5 15 16C13.5 17.2 11 17.8 8.7 17.8Z" fill="#3d7cc2"/><path d="M13.5 13.3L14.8 14.8" stroke="#fff" stroke-width="0.8"/></svg>
<svg style="left:604px;top:114px;" width="22" height="20" viewBox="0 0 22 20"><path d="M2.6 15.6V2.6H17.8V5" fill="none" stroke="#6d6d6d" stroke-width="1.4"/><rect x="3.3" y="3.3" width="14" height="12" fill="#fff"/><rect x="7" y="7" width="10" height="8" fill="#c5daf0"/><path d="M6.8 3.3V15.3M3.3 6.8H17.5M3.3 10.8H6.8" stroke="#b0b0b0" stroke-width="0.9"/><path d="M19.5 5.5L13.6 11.6L15.8 13.7L20 10Z" fill="#707070"/><path d="M8.7 17.8C10 14.7 11.8 12.6 14.8 12.2C16.2 13 16.2 14.5 15 16C13.5 17.2 11 17.8 8.7 17.8Z" fill="#3d7cc2"/><path d="M13.5 13.3L14.8 14.8" stroke="#fff" stroke-width="0.8"/></svg>
<svg style="left:752px;top:77px;" width="5" height="3" viewBox="0 0 5 3"><polygon points="0,0 5,0 2.5,3" fill="#606060"/></svg>
<svg style="left:711px;top:100px;" width="5" height="3" viewBox="0 0 5 3"><polygon points="0,0 5,0 2.5,3" fill="#606060"/></svg>
<svg style="left:681px;top:123px;" width="5" height="3" viewBox="0 0 5 3"><polygon points="0,0 5,0 2.5,3" fill="#606060"/></svg>
<svg style="left:774px;top:68px;" width="20" height="20" viewBox="0 0 20 20"><path d="M2.7 5.5V2.7H10.7V5.5H2.7M6.7 2.7V5.5" fill="none" stroke="#6d6d6d" stroke-width="1.3"/><path d="M2.7 12.3V18.3H10.7V12.3M6.7 12.3V18.3M2.7 15.3H10.7" fill="none" stroke="#6d6d6d" stroke-width="1.3"/><rect x="9.7" y="7.7" width="8.6" height="3.6" fill="#c5daf0" stroke="#6d6d6d" stroke-width="1.3"/><path d="M14 7.7V11.3" stroke="#6d6d6d" stroke-width="1.1"/><path d="M2.2 9.5L5.7 6.2V8.3H8.3V10.7H5.7V12.8Z" fill="#3d7cc2"/></svg>
<svg style="left:774px;top:91px;" width="20" height="20" viewBox="0 0 20 20"><path d="M2.5 2.5H10.5V6.5H2.5ZM6.5 2.5V6.5M2.5 11.5V17.5H10.5V11.5H2.5M6.5 11.5V17.5M2.5 14.5H10.5" fill="#fff" stroke="#6d6d6d" stroke-width="1.1"/><rect x="5.5" y="7.5" width="5" height="3.5" fill="#c5daf0" stroke="#6d6d6d" stroke-width="1.1"/><path d="M11.3 5.8L17.6 12.2M17.6 5.8L11.3 12.2" stroke="#e0603c" stroke-width="1.7"/></svg>
<svg style="left:834px;top:77px;" width="5" height="3" viewBox="0 0 5 3"><polygon points="0,0 5,0 2.5,3" fill="#606060"/></svg>
<svg style="left:838px;top:100px;" width="5" height="3" viewBox="0 0 5 3"><polygon points="0,0 5,0 2.5,3" fill="#606060"/></svg>
<svg style="left:836px;top:123px;" width="5" height="3" viewBox="0 0 5 3"><polygon points="0,0 5,0 2.5,3" fill="#606060"/></svg>
<svg style="left:774px;top:114px;" width="20" height="20" viewBox="0 0 20 20"><path d="M2.5 1.6V5.2M15.5 1.6V5.2" stroke="#3d7cc2" stroke-width="1"/><path d="M4 3.4H14" stroke="#3d7cc2" stroke-width="1"/><path d="M5.5 1.8L3.2 3.4L5.5 5ZM12.5 1.8L14.8 3.4L12.5 5Z" fill="#3d7cc2"/><rect x="2.5" y="6.8" width="14" height="10.7" fill="#fff" stroke="#6d6d6d" stroke-width="1.1"/><path d="M2.5 10.3H16.5M2.5 13.8H16.5M6 6.8V17.5M9.8 6.8V17.5M13.3 6.8V17.5" stroke="#b0b0b0" stroke-width="0.9"/><rect x="5.5" y="9.8" width="4.5" height="3.6" fill="#3d7cc2"/></svg>
<svg style="left:858px;top:68px;" width="20" height="20" viewBox="0 0 20 20"><path d="M16.6 4.6V3H3.2L9.6 9.5L3.2 16H16.6V14.4" fill="none" stroke="#444" stroke-width="2" stroke-linejoin="bevel"/></svg>
<svg style="left:882px;top:77px;" width="5" height="3" viewBox="0 0 5 3"><polygon points="0,0 5,0 2.5,3" fill="#606060"/></svg>
<svg style="left:859px;top:91px;" width="18" height="20" viewBox="0 0 18 20"><rect x="2.5" y="2.5" width="13" height="15" fill="#fff" stroke="#777" stroke-width="1"/><rect x="2" y="2" width="14" height="3.5" fill="#777"/><path d="M9 7V15" stroke="#3d7cc2" stroke-width="2"/><path d="M5.5 11.5L9 15L12.5 11.5" fill="none" stroke="#3d7cc2" stroke-width="2"/></svg>
<svg style="left:880px;top:100px;" width="5" height="3" viewBox="0 0 5 3"><polygon points="0,0 5,0 2.5,3" fill="#606060"/></svg>
<svg style="left:858px;top:114px;" width="20" height="16" viewBox="0 0 20 16"><path d="M3.2 10.8L11.3 2.7Q12.3 1.8 13.2 2.7L15.4 4.9Q16.3 5.8 15.4 6.8L7.3 14.9Z" fill="#e8849a"/><path d="M5.6 8.4L9.8 12.6" stroke="#f3f3f3" stroke-width="1.2"/></svg>
<svg style="left:880px;top:123px;" width="5" height="3" viewBox="0 0 5 3"><polygon points="0,0 5,0 2.5,3" fill="#606060"/></svg>
<svg style="left:896px;top:70px;" width="16" height="16" viewBox="0 0 16 16"><path d="M2.9 14.5L7.6 3.2L12.3 14.5M4.6 10.6H10.6" fill="none" stroke="#3d7cc2" stroke-width="2"/></svg>
<svg style="left:896px;top:85px;" width="14" height="16" viewBox="0 0 14 16"><path d="M3.2 3.1H12L3.4 12.6H12.3" fill="none" stroke="#9155bb" stroke-width="1.9"/></svg>
<svg style="left:908px;top:78px;" width="22" height="18" viewBox="0 0 22 18"><path d="M2 2H19L12 9.2V16.5H9V9.2Z" fill="#777"/><path d="M3.5 2.3L10.5 9.2V16.2" fill="none" stroke="#fff" stroke-width="0.9"/><rect x="10" y="9.5" width="1.2" height="6.3" fill="#fff"/></svg>
<svg style="left:925px;top:127.5px;" width="5" height="3" viewBox="0 0 5 3"><polygon points="0,0 5,0 2.5,3" fill="#606060"/></svg>
<svg style="left:940px;top:70px;" width="32" height="30" viewBox="0 0 32 30"><circle cx="19" cy="11.9" r="8.9" fill="#fff" stroke="#3d7cc2" stroke-width="2.2"/><path d="M12.6 18.4L4.5 26.5" stroke="#3d7cc2" stroke-width="3.4" stroke-linecap="round"/></svg>
<svg style="left:970px;top:127.5px;" width="5" height="3" viewBox="0 0 5 3"><polygon points="0,0 5,0 2.5,3" fill="#606060"/></svg>
<svg style="left:1004px;top:144px;" width="12" height="8" viewBox="0 0 12 8"><path d="M1.5 6.5L6 2L10.5 6.5" fill="none" stroke="#606060" stroke-width="1.4"/></svg>
<svg style="left:93px;top:177px;" width="7" height="4" viewBox="0 0 7 4"><polygon points="0,0 7,0 3.5,4" fill="#777"/></svg>
<svg style="left:149px;top:174px;" width="14" height="13" viewBox="0 0 14 13"><path d="M2 1.6L12.4 11.6M12.4 1.6L2 11.6" stroke="#c6c6c6" stroke-width="1.4"/></svg>
<svg style="left:185px;top:174px;" width="16" height="13" viewBox="0 0 16 13"><path d="M1.8 6.3L5.3 10.5L14 1.8" fill="none" stroke="#c6c6c6" stroke-width="2.6"/></svg>
<svg style="left:218px;top:170px;" width="20" height="20" viewBox="0 0 20 20"><path d="M13.2 5.3Q12.6 3.8 11.2 4Q9.9 4.3 9.4 7L7.6 13.6Q7 16 5 15.6Q4.1 15.3 4.2 14.4" fill="none" stroke="#666" stroke-width="1.45"/><path d="M6.2 7.3H11" stroke="#666" stroke-width="1.1"/><path d="M9.9 10.4H10.9L13.5 13.5H14.9M15.3 10.2L9.2 14.2" fill="none" stroke="#666" stroke-width="1.25"/></svg>
<svg style="left:1004px;top:174px;" width="14" height="10" viewBox="0 0 14 10"><path d="M3 2.5L7 6.5L11 2.5" fill="none" stroke="#6a6a6a" stroke-width="1.8"/></svg>
<svg style="left:750px;top:710px;" width="13" height="13" viewBox="0 0 13 13"><path d="M0 0H13V13H0Z" fill="#c8c8c8"/><g fill="#666"><rect x="0" y="0" width="1.2" height="13"/><rect x="4" y="0" width="1.2" height="13"/><rect x="8" y="0" width="1.2" height="13"/><rect x="11.8" y="0" width="1.2" height="13"/><rect x="0" y="0" width="13" height="1.2"/><rect x="0" y="4" width="13" height="1.2"/><rect x="0" y="8" width="13" height="1.2"/><rect x="0" y="11.8" width="13" height="1.2"/></g></svg>
<svg style="left:788px;top:710px;" width="14" height="13" viewBox="0 0 14 13"><rect x="0.6" y="0.6" width="12.8" height="11.8" fill="none" stroke="#666" stroke-width="1.2"/><rect x="3.6" y="2.6" width="6.8" height="7.8" fill="none" stroke="#666" stroke-width="1.1"/><path d="M5 4.8H9M5 6.8H9M5 8.8H9" stroke="#666" stroke-width="0.9"/></svg>
<svg style="left:826px;top:710px;" width="14" height="13" viewBox="0 0 14 13"><rect x="0.6" y="0.6" width="12.8" height="11.8" fill="none" stroke="#666" stroke-width="1.2"/><path d="M0.6 7.6H8.6V0.6M4.6 0.6V7.6" fill="none" stroke="#666" stroke-width="1.1"/></svg>
</body></html>
